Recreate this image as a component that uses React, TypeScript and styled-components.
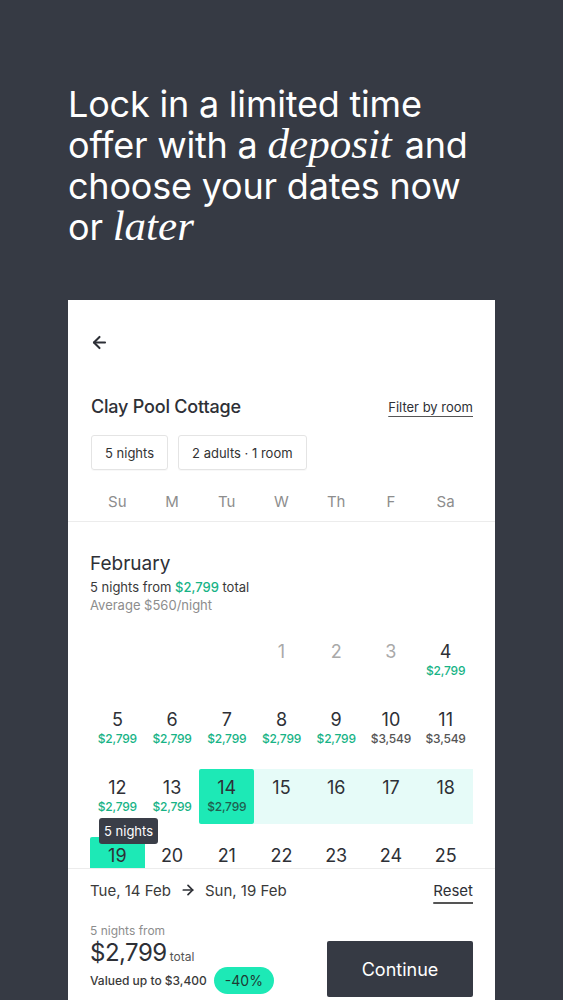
import React from 'react';
import styled, { createGlobalStyle } from 'styled-components';
import { ArrowLeft, ArrowRight } from 'lucide-react';

const GlobalStyle = createGlobalStyle`
  html, body {
    margin: 0;
    padding: 0;
    background: #363a44;
    overflow: hidden;
  }
  * { box-sizing: border-box; }
`;

const Page = styled.div`
  width: 563px;
  height: 1000px;
  background: #363a44;
  font-family: Inter, 'Noto Sans', sans-serif;
  padding: 84px 0 0 68px;
`;

const Headline = styled.h1`
  margin: 0;
  color: #fff;
  font-weight: 400;
  font-size: 36px;
  line-height: 41px;
  letter-spacing: -0.2px;
  width: 412px;

  em {
    font-family: 'Liberation Serif', 'DejaVu Serif', serif;
    font-style: italic;
    font-size: 43px;
    line-height: 30px;
    letter-spacing: 0;
    padding-right: 3px;
  }
`;

const Card = styled.div`
  margin-top: 52px;
  width: 427px;
  height: 700px;
  background: #fff;
  display: flex;
  flex-direction: column;
  overflow: hidden;
`;

const CardHead = styled.div`
  padding: 32px 22px 9px 23px;
  border-bottom: 1px solid #ececec;
`;

const BackButton = styled.div`
  height: 20px;
  display: flex;
  align-items: center;
  margin-left: -1px;
  color: #2c2f36;
`;

const TitleRow = styled.div`
  margin-top: 43px;
  display: flex;
  justify-content: space-between;
  align-items: center;
`;

const Title = styled.div`
  font-size: 18px;
  line-height: 24px;
  font-weight: 500;
  color: #2e3036;
  letter-spacing: -0.2px;
`;

const TextLink = styled.span<{ $size?: number }>`
  font-size: ${p => p.$size ?? 13}px;
  color: #2e3036;
  text-decoration: underline;
  text-decoration-color: #555;
  text-underline-offset: ${p => ((p.$size ?? 13) > 14 ? 6 : 4)}px;
  text-decoration-thickness: ${p => ((p.$size ?? 13) > 14 ? 2 : 1)}px;
`;

const Chips = styled.div`
  margin-top: 16px;
  display: flex;
  gap: 10px;
`;

const Chip = styled.div`
  height: 35px;
  padding: 0 13px;
  display: flex;
  align-items: center;
  border: 1px solid #e4e4e4;
  border-radius: 3px;
  font-size: 13px;
  color: #333;
  box-shadow: 0 1px 1px rgba(0, 0, 0, 0.03);
`;

const WeekGrid = styled.div`
  margin: 22px 0 0 -1px;
  display: grid;
  grid-template-columns: repeat(7, 1fr);
`;

const WeekDay = styled.div`
  text-align: center;
  font-size: 15px;
  line-height: 20px;
  color: #8d8d8d;
`;

const CalendarBody = styled.div`
  flex: 1;
  overflow: hidden;
  padding: 30px 22px 0 22px;
`;

const Month = styled.div`
  font-size: 19px;
  line-height: 24px;
  color: #2e3036;
`;

const MonthNote = styled.div<{ $muted?: boolean }>`
  font-size: 13px;
  line-height: 18px;
  color: ${p => (p.$muted ? '#8d8d8d' : '#3a3a3a')};
  margin-top: ${p => (p.$muted ? 0 : 2)}px;

  b {
    font-weight: 500;
    color: #17b386;
  }
`;

const DayGrid = styled.div`
  margin-top: 19px;
  display: grid;
  grid-template-columns: repeat(7, 1fr);
  row-gap: 13px;
`;

type CellKind = 'plain' | 'start' | 'range' | 'end' | 'empty';

const Cell = styled.div<{ $kind: CellKind }>`
  position: relative;
  height: 55px;
  padding-top: 8px;
  text-align: center;
  background: ${p =>
    p.$kind === 'start' || p.$kind === 'end'
      ? '#1de9b6'
      : p.$kind === 'range'
      ? '#e6fbf8'
      : 'transparent'};
  border-radius: ${p => (p.$kind === 'start' || p.$kind === 'end' ? '2px' : '0')};
`;

const DayNum = styled.div<{ $past?: boolean }>`
  font-size: 18px;
  line-height: 22px;
  color: ${p => (p.$past ? '#a9a9a9' : '#2e3036')};
`;

const Price = styled.div<{ $tone: 'green' | 'grey' | 'dark' }>`
  font-size: 12px;
  line-height: 14px;
  margin-top: 1px;
  font-weight: 500;
  letter-spacing: -0.2px;
  color: ${p => (p.$tone === 'green' ? '#17b386' : p.$tone === 'dark' ? '#1f5e4e' : '#555')};
`;

const Tooltip = styled.div`
  position: absolute;
  left: 9px;
  top: 49px;
  z-index: 2;
  background: #3a3e48;
  color: #fff;
  font-size: 13px;
  line-height: 26px;
  padding: 0 5px;
  border-radius: 3px;
  white-space: nowrap;
`;

const Footer = styled.div`
  border-top: 1px solid #ececec;
  padding: 10px 22px 3px 22px;
  background: #fff;
`;

const DatesRow = styled.div`
  display: flex;
  align-items: center;
  justify-content: space-between;
  height: 22px;
`;

const DateRange = styled.div`
  display: flex;
  align-items: center;
  gap: 9px;
  font-size: 15px;
  color: #3a3a3a;
`;

const SummaryRow = styled.div`
  margin-top: 22px;
  display: flex;
  justify-content: space-between;
  align-items: flex-end;
`;

const Summary = styled.div`
  display: flex;
  flex-direction: column;
  padding-bottom: 3px;
`;

const SmallGrey = styled.div`
  font-size: 12px;
  line-height: 16px;
  color: #8d8d8d;
`;

const Total = styled.div`
  display: flex;
  align-items: baseline;
  gap: 3px;
  font-size: 24px;
  line-height: 28px;
  color: #2e3036;
  letter-spacing: -0.5px;

  span {
    font-size: 12px;
    letter-spacing: 0;
    color: #555;
  }
`;

const ValueRow = styled.div`
  margin-top: -4px;
  display: flex;
  align-items: center;
  gap: 7px;
  font-size: 12px;
  font-weight: 500;
  color: #3a3a3a;
`;

const Badge = styled.span`
  background: #1de9b6;
  color: #1d3b34;
  font-size: 14px;
  font-weight: 400;
  line-height: 27px;
  padding: 0 11px;
  border-radius: 14px;
`;

const ContinueButton = styled.button`
  width: 146px;
  height: 56px;
  border: none;
  border-radius: 2px;
  background: #363a44;
  color: #fff;
  font-family: inherit;
  font-size: 18px;
`;

type Day = { n: number; price?: string; tone?: 'green' | 'grey' | 'dark'; kind?: CellKind; past?: boolean };

const days: Day[] = [
  { n: 1, past: true },
  { n: 2, past: true },
  { n: 3, past: true },
  { n: 4, price: '$2,799', tone: 'green' },
  ...[5, 6, 7, 8, 9].map(n => ({ n, price: '$2,799', tone: 'green' as const })),
  { n: 10, price: '$3,549', tone: 'grey' },
  { n: 11, price: '$3,549', tone: 'grey' },
  { n: 12, price: '$2,799', tone: 'green' },
  { n: 13, price: '$2,799', tone: 'green' },
  { n: 14, price: '$2,799', tone: 'dark', kind: 'start' },
  ...[15, 16, 17, 18].map(n => ({ n, kind: 'range' as const })),
  { n: 19, kind: 'end' },
  ...[20, 21, 22, 23, 24, 25].map(n => ({ n })),
];

export default function App() {
  return (
    <Page>
      <GlobalStyle />
      <Headline>
        Lock in a limited time offer with a <em>deposit</em> and choose your dates now or <em>later</em>
      </Headline>
      <Card>
        <CardHead>
          <BackButton>
            <ArrowLeft size={19} strokeWidth={2.6} />
          </BackButton>
          <TitleRow>
            <Title>Clay Pool Cottage</Title>
            <TextLink>Filter by room</TextLink>
          </TitleRow>
          <Chips>
            <Chip>5 nights</Chip>
            <Chip>2 adults · 1 room</Chip>
          </Chips>
          <WeekGrid>
            {['Su', 'M', 'Tu', 'W', 'Th', 'F', 'Sa'].map(d => (
              <WeekDay key={d}>{d}</WeekDay>
            ))}
          </WeekGrid>
        </CardHead>
        <CalendarBody>
          <Month>February</Month>
          <MonthNote>
            5 nights from <b>$2,799</b> total
          </MonthNote>
          <MonthNote $muted>Average $560/night</MonthNote>
          <DayGrid>
            {[0, 1, 2].map(i => (
              <Cell key={`e${i}`} $kind="empty" />
            ))}
            {days.map(d => (
              <Cell key={d.n} $kind={d.kind ?? 'plain'}>
                <DayNum $past={d.past}>{d.n}</DayNum>
                {d.price && <Price $tone={d.tone ?? 'green'}>{d.price}</Price>}
                {d.n === 12 && <Tooltip>5 nights</Tooltip>}
              </Cell>
            ))}
          </DayGrid>
        </CalendarBody>
        <Footer>
          <DatesRow>
            <DateRange>
              Tue, 14 Feb
              <ArrowRight size={16} strokeWidth={2.6} color="#2e3036" />
              Sun, 19 Feb
            </DateRange>
            <TextLink $size={15}>Reset</TextLink>
          </DatesRow>
          <SummaryRow>
            <Summary>
              <SmallGrey>5 nights from</SmallGrey>
              <Total>
                $2,799<span>total</span>
              </Total>
              <ValueRow>
                Valued up to $3,400
                <Badge>-40%</Badge>
              </ValueRow>
            </Summary>
            <ContinueButton>Continue</ContinueButton>
          </SummaryRow>
        </Footer>
      </Card>
    </Page>
  );
}
